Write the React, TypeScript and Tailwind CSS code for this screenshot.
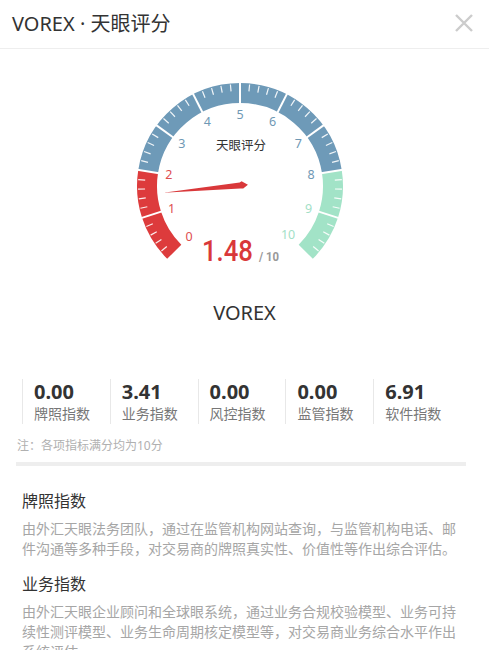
import React from 'react';

const CX = 240;
const CY = 186;

function angleOf(v: number): number {
  return ((225 - 27 * v) * Math.PI) / 180;
}

function pt(v: number, r: number): [number, number] {
  const a = angleOf(v);
  return [CX + r * Math.cos(a), CY - r * Math.sin(a)];
}

function arcPath(v0: number, v1: number, r: number): string {
  const [x0, y0] = pt(v0, r);
  const [x1, y1] = pt(v1, r);
  return `M ${x0} ${y0} A ${r} ${r} 0 0 1 ${x1} ${y1}`;
}

const SEGMENTS = [
  { from: 0, to: 2, color: '#dd3b3c' },
  { from: 2, to: 8, color: '#6e9ab8' },
  { from: 8, to: 10, color: '#a2e3c7' },
];

function labelColor(v: number): string {
  if (v <= 2) return '#de4e4f';
  if (v <= 8) return '#6f98b4';
  return '#a3dfc7';
}

function Gauge({ value }: { value: number }) {
  const ticks: number[] = [];
  for (let i = 0; i <= 50; i++) {
    if (i % 5 !== 0) ticks.push(i / 5);
  }
  const splits = [1, 2, 3, 4, 5, 6, 7, 8, 9];
  const labels = [0, 1, 2, 3, 4, 5, 6, 7, 8, 9, 10];
  const needleAngle = 225 - 27 * value;

  return (
    <svg width="489" height="232" viewBox="0 49 489 232" className="block">
      {SEGMENTS.map((s) => (
        <path key={s.from} d={arcPath(s.from, s.to, 93)} fill="none" stroke={s.color} strokeWidth="20" />
      ))}
      {ticks.map((t) => {
        const [x0, y0] = pt(t, 102);
        const [x1, y1] = pt(t, 95);
        return <line key={t} x1={x0} y1={y0} x2={x1} y2={y1} stroke="#fff" strokeWidth="1.2" strokeOpacity="0.9" />;
      })}
      {splits.map((s) => {
        const [x0, y0] = pt(s, 104);
        const [x1, y1] = pt(s, 82);
        return <line key={s} x1={x0} y1={y0} x2={x1} y2={y1} stroke="#fff" strokeWidth="2" />;
      })}
      {labels.map((l) => {
        const [x, y] = pt(l, l === 10 ? 68 : 72);
        return (
          <text
            key={l}
            x={x}
            y={y}
            textAnchor="middle"
            dominantBaseline="central"
            fontSize="12.5"
            fill={labelColor(l)}
            fontFamily='"Noto Sans", "Noto Sans CJK SC", sans-serif'
          >
            {l}
          </text>
        );
      })}
      <text
        x={CX + 1}
        y={144}
        textAnchor="middle"
        dominantBaseline="central"
        fontSize="12.5"
        fill="#333"
        fontFamily='"Noto Sans CJK SC", sans-serif'
      >
        天眼评分
      </text>
      <polygon
        points="77,0 0,3.4 -2,4.6 -8,0.6 -3,-2.8 0,-2.6"
        fill="#d9383a"
        transform={`translate(${CX} ${CY}) rotate(${-needleAngle})`}
      />
      <text
        x="202"
        y="261"
        fontSize="30"
        fontWeight="500"
        fill="#d9383a"
        textLength="51"
        lengthAdjust="spacingAndGlyphs"
        fontFamily='Roboto, "Noto Sans", sans-serif'
      >
        {value.toFixed(2)}
      </text>
      <text
        x="259"
        y="261"
        fontSize="13"
        fontWeight="700"
        fill="#999"
        textLength="20"
        lengthAdjust="spacingAndGlyphs"
        fontFamily='Roboto, "Noto Sans", sans-serif'
      >
        / 10
      </text>
    </svg>
  );
}

const STATS = [
  { value: '0.00', label: '牌照指数' },
  { value: '3.41', label: '业务指数' },
  { value: '0.00', label: '风控指数' },
  { value: '0.00', label: '监管指数' },
  { value: '6.91', label: '软件指数' },
];

const SECTIONS = [
  {
    title: '牌照指数',
    text: '由外汇天眼法务团队，通过在监管机构网站查询，与监管机构电话、邮件沟通等多种手段，对交易商的牌照真实性、价值性等作出综合评估。',
  },
  {
    title: '业务指数',
    text: '由外汇天眼企业顾问和全球眼系统，通过业务合规校验模型、业务可持续性测评模型、业务生命周期核定模型等，对交易商业务综合水平作出系统评估。',
  },
];

export default function App() {
  return (
    <div
      className="flex h-[664px] w-[489px] flex-col bg-white text-[#333]"
      style={{ fontFamily: '"Noto Sans", "Noto Sans CJK SC", sans-serif' }}
    >
      <header className="flex h-[49px] shrink-0 items-center justify-between border-b border-[#eeeeee] pl-3 pr-4">
        <h1 className="text-[20px] font-normal leading-[28px] text-[#333]">VOREX · 天眼评分</h1>
        <svg width="18" height="18" viewBox="0 0 18 18" className="mt-[-3px]">
          <path d="M1 1 L17 17 M17 1 L1 17" stroke="#cccccc" strokeWidth="2.4" />
        </svg>
      </header>

      <main className="h-[601px] overflow-hidden">
        <Gauge value={1.48} />

        <div className="mt-[18px] text-center text-[20px] leading-[28px] text-[#333]">VOREX</div>

        <div className="mt-[52px] grid grid-cols-5 pl-[22px] pr-[28px]">
          {STATS.map((s, i) => (
            <div key={i} className="h-[45px] border-l border-[#e8e8e8] pl-[11px]">
              <div className="text-[20px] font-bold leading-[26px] text-[#333]">{s.value}</div>
              <div className="text-[14px] leading-[18px] text-[#777]">{s.label}</div>
            </div>
          ))}
        </div>

        <p className="mt-[14px] pl-[17px] text-[12px] leading-[16px] text-[#b0b0b0]">注：各项指标满分均为10分</p>

        <div className="mt-2 ml-4 mr-[23px] h-[4px] bg-[#eeeeee]" />

        <div className="px-[22px]">
          {SECTIONS.map((s, i) => (
            <section key={s.title} className={i === 0 ? 'mt-[23px]' : 'mt-[13px]'}>
              <h2 className="text-[16px] font-normal leading-[24px] text-[#333]">{s.title}</h2>
              <p className="mt-[6px] text-[14px] leading-[20px] text-[#a6a6a6]">{s.text}</p>
            </section>
          ))}
        </div>
      </main>
    </div>
  );
}
